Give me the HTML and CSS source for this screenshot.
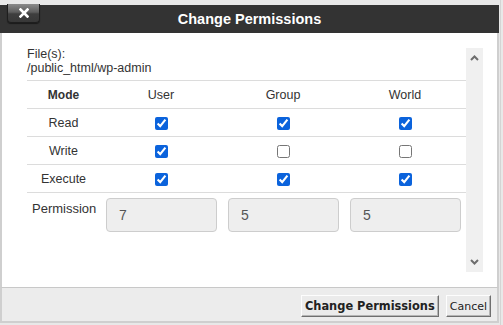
FILE: index.html
```html
<!DOCTYPE html>
<html>
<head>
<meta charset="utf-8">
<link rel="stylesheet" href="styles.css">
</head>
<body>
<div class="page">
  <div class="dialog">
    <div class="titlebar">
      <div class="close-wrap">
        <button class="close" aria-label="Close">
          <svg width="10" height="10" viewBox="0 0 10 10"><path d="M1.5 1.5 L8.5 8.5 M8.5 1.5 L1.5 8.5" stroke="#fff" stroke-width="2.6" stroke-linecap="square"/></svg>
        </button>
      </div>
      <div class="title">Change Permissions</div>
      <div></div>
    </div>
    <div class="body">
      <div class="content">
        <div class="files">
          <div>File(s):</div>
          <div>/public_html/wp-admin</div>
        </div>
        <table class="perms">
          <colgroup><col class="c-mode"><col><col><col></colgroup>
          <tr><th class="mode">Mode</th><th>User</th><th>Group</th><th>World</th></tr>
          <tr><td>Read</td><td><input type="checkbox" class="focused" checked></td><td><input type="checkbox" checked></td><td><input type="checkbox" checked></td></tr>
          <tr><td>Write</td><td><input type="checkbox" checked></td><td><input type="checkbox"></td><td><input type="checkbox"></td></tr>
          <tr><td>Execute</td><td><input type="checkbox" checked></td><td><input type="checkbox" checked></td><td><input type="checkbox" checked></td></tr>
        </table>
        <div class="perm-row">
          <div class="perm-label">Permission</div>
          <input class="perm-input" type="text" value="7" readonly>
          <input class="perm-input" type="text" value="5" readonly>
          <input class="perm-input" type="text" value="5" readonly>
        </div>
      </div>
      <div class="scroll">
        <svg width="9" height="6" viewBox="0 0 9 6"><path d="M1 5 L4.5 1.5 L8 5" fill="none" stroke="#6d6d6d" stroke-width="2"/></svg>
        <svg width="9" height="6" viewBox="0 0 9 6"><path d="M1 1 L4.5 4.5 L8 1" fill="none" stroke="#6d6d6d" stroke-width="2"/></svg>
      </div>
    </div>
    <div class="footer">
      <button class="btn btn-primary">Change Permissions</button>
      <button class="btn">Cancel</button>
    </div>
  </div>
</div>
</body>
</html>
```

FILE: styles.css
```css
html, body {
  margin: 0;
  padding: 0;
}
body {
  background: #e8e8e8;
  font-family: "Liberation Sans", Arial, sans-serif;
  color: #333;
  width: 503px;
  height: 325px;
  overflow: hidden;
}
.page {
  padding-top: 5px;
  border-right: 1px solid #d4d4d4;
  width: 500px;
  height: 320px;
}
.dialog {
  width: 499px;
}
.titlebar {
  height: 28px;
  background: #333333;
  display: grid;
  grid-template-columns: 1fr auto 1fr;
  align-items: center;
}
.close-wrap {
  align-self: start;
  padding-left: 7px;
  margin-top: -1px;
}
.close {
  width: 33px;
  height: 19px;
  border: 1px solid #1e1e1e;
  border-top: 0;
  border-radius: 0 0 4px 4px;
  background: linear-gradient(#8a8a8a 0%, #5e5e5e 45%, #3e3e3e 55%, #383838 100%);
  display: flex;
  align-items: center;
  justify-content: center;
  padding: 0;
  box-shadow: 0 1px 1px rgba(0,0,0,0.5);
}
.close svg {
  display: block;
}
.title {
  color: #fff;
  font-weight: bold;
  font-size: 14.5px;
}
.body {
  display: flex;
  height: 254px;
  background: #fff;
  border-left: 2px solid #cfcfcf;
  border-right: 2px solid #cfcfcf;
}
.content {
  width: 439px;
  padding: 14px 0 0 25px;
  font-size: 12px;
}
.files {
  font-size: 12.5px;
  line-height: 14px;
  margin-bottom: 5px;
}
.perms {
  width: 439px;
  border-collapse: collapse;
  table-layout: fixed;
}
.c-mode {
  width: 73px;
}
.perms th, .perms td {
  height: 27px;
  padding: 0;
  border-top: 1px solid #dcdcdc;
  border-bottom: 1px solid #dcdcdc;
  text-align: center;
  vertical-align: middle;
  font-size: 12.5px;
}
.perms th {
  font-weight: normal;
}
.perms th.mode {
  font-weight: bold;
  font-size: 12px;
}
.perms input[type=checkbox] {
  width: 13px;
  height: 13px;
  margin: 0;
  vertical-align: middle;
  accent-color: #0b63dc;
}
.perm-row {
  display: flex;
  align-items: flex-start;
  padding-top: 5px;
}
.perm-label {
  flex: 0 0 auto;
  width: 68px;
  padding-left: 5px;
  margin-right: 6px;
  font-size: 13px;
  padding-top: 3px;
}
.perm-input {
  flex: 0 0 auto;
  width: 111px;
  height: 34px;
  box-sizing: border-box;
  margin: 0 11px 0 0;
  padding: 0 0 0 12px;
  border: 1px solid #cdcdcd;
  border-radius: 4px;
  background: #eeeeee;
  font-family: "Liberation Sans", Arial, sans-serif;
  font-size: 14px;
  color: #555;
}
.perm-input:last-child {
  margin-right: 0;
}
.scroll {
  width: 17px;
  margin: 15px 14px 15px 0;
  background: #f0f0f0;
  display: flex;
  flex-direction: column;
  justify-content: space-between;
  align-items: center;
  padding: 7px 0 7px;
}
.scroll svg {
  display: block;
}
.footer {
  background: #ececec;
  border-top: 1px solid #c8c8c8;
  border-left: 2px solid #cfcfcf;
  border-right: 2px solid #cfcfcf;
  border-bottom: 2px solid #cfcfcf;
  display: flex;
  justify-content: flex-end;
  align-items: flex-start;
  gap: 7px;
  padding: 7px 6px 0 0;
  box-sizing: border-box;
  height: 36px;
}
.btn {
  font-family: "DejaVu Sans", Verdana, sans-serif;
  font-size: 11px;
  color: #222;
  background: #ebebeb;
  height: 22px;
  padding: 0 3px;
  border: 1px solid;
  border-color: #fdfdfd #6f6f6f #6f6f6f #fdfdfd;
  box-shadow: inset -1px -1px 0 #b5b5b5;
  border-radius: 0;
}
.btn-primary {
  font-weight: bold;
  font-size: 11.4px;
  padding: 0 3px;
}
```
